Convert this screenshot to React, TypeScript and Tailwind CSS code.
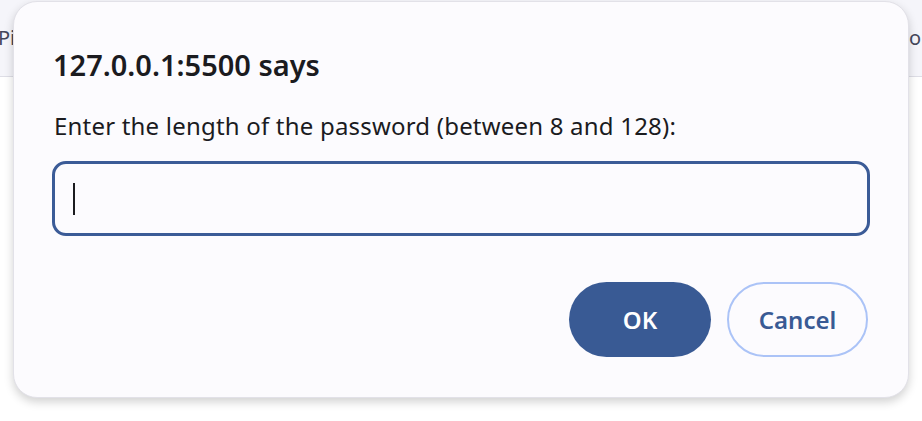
import React from "react";

export default function App() {
  return (
    <div
      className="relative w-[922px] h-[421px] overflow-hidden bg-white"
      style={{ fontFamily: '"Noto Sans", "Open Sans", sans-serif' }}
    >
      <div className="h-[77px] bg-[#f5f5fa] border-b border-[#dedee6] flex items-center justify-between">
        <span className="text-[20px] text-[#44475a] -ml-[2px]">Pi</span>
        <span className="text-[20px] text-[#44475a] mr-[1px]">o</span>
      </div>
      <div className="absolute left-[13px] top-[1px] w-[896px] h-[397px] rounded-[24px] bg-[#fcfbfe] border border-[#e2e1e8] shadow-[0_4px_10px_rgba(0,0,0,0.18)] flex flex-col pl-[38px] pr-[38px]">
        <h1 className="mt-[43px] pl-[1px] text-[29px] leading-[40px] font-semibold text-[#1b1b1f]">
          127.0.0.1:5500 says
        </h1>
        <p className="mt-[27px] pl-[2px] text-[24px] leading-[28px] text-[#1b1b1f] tracking-[0.2px]">
          Enter the length of the password (between 8 and 128):
        </p>
        <div className="mt-[21px] h-[75px] rounded-[14px] border-[3px] border-[#3b5b97] flex items-center pl-[18px]">
          <div className="w-[2px] h-[32px] bg-[#1b1b1f]" />
        </div>
        <div className="mt-[46px] flex justify-end gap-[16px] pr-[2px]">
          <button className="w-[142px] h-[75px] rounded-full bg-[#395a94] text-white text-[24px] font-semibold">
            OK
          </button>
          <button className="w-[141px] h-[75px] rounded-full border-2 border-[#abc3f7] bg-[#fcfbfe] text-[#395a94] text-[24px] font-semibold">
            Cancel
          </button>
        </div>
      </div>
    </div>
  );
}
